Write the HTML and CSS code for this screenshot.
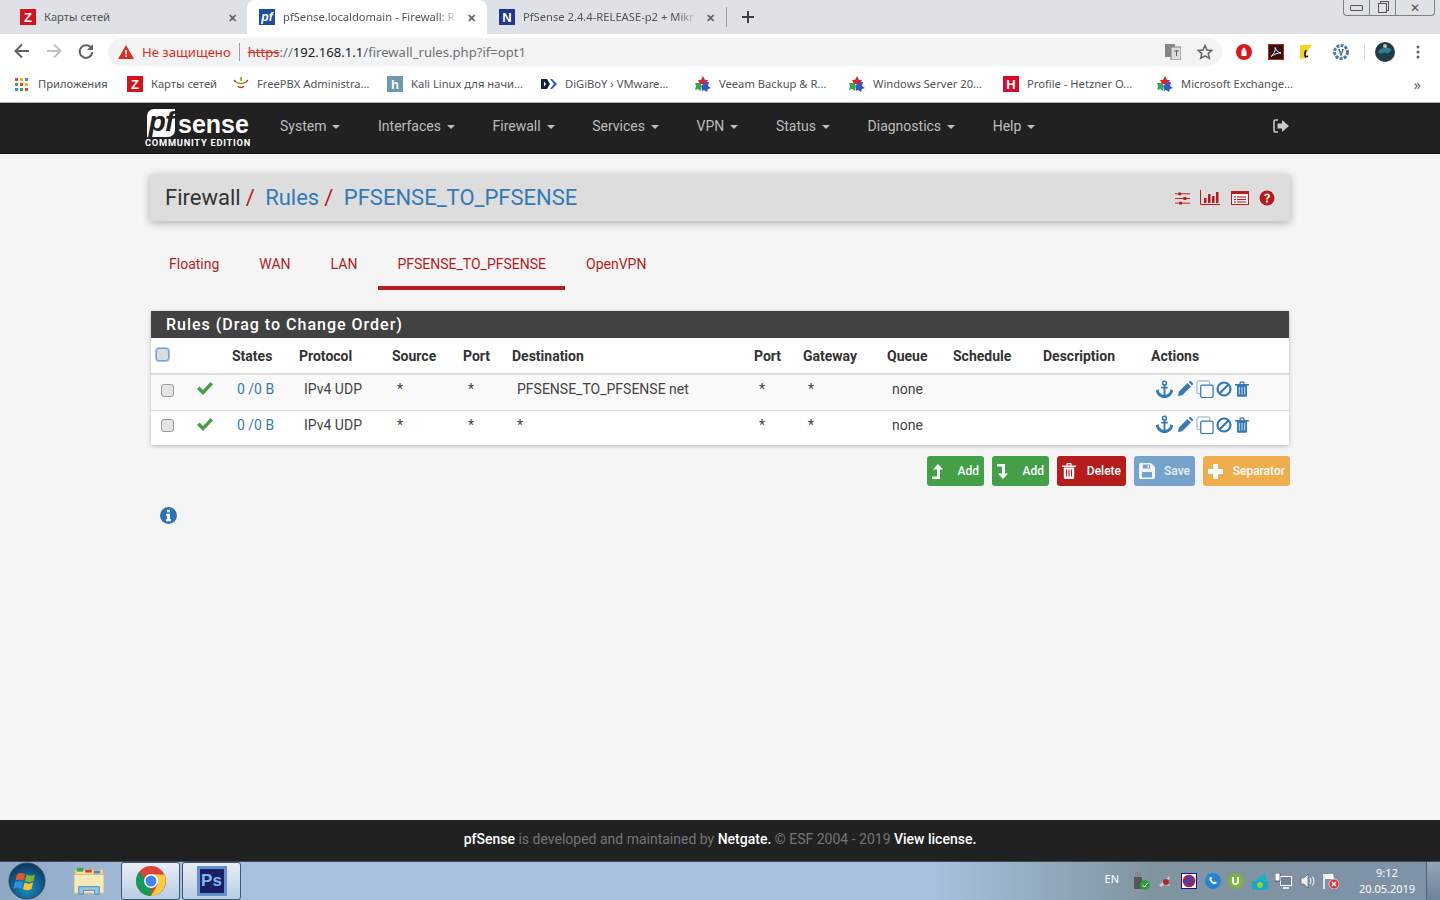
FILE: index.html
```html
<!DOCTYPE html>
<html lang="ru">

<head>
    <meta charset="utf-8">
    <title>pfSense.localdomain - Firewall: Rules</title>
    <link rel="stylesheet" href="styles.css">
</head>

<body>

    <svg class="defs" width="0" height="0">
        <defs>
            <symbol id="anchor" viewBox="0 0 20 20">
                <circle cx="10" cy="3.4" r="2" fill="none" stroke="currentColor" stroke-width="1.6" />
                <path d="M10 5v12M6.5 8h7" fill="none" stroke="currentColor" stroke-width="2" />
                <path d="M1 11l3-1.6v1.8c.6 2.6 3 4 5 4.3h2c2-.3 4.400-1.700 5-4.300V9.400L19 11c-.3 4.500-4.500 8-9 8s-8.700-3.500-9-8z" fill="currentColor" />
            </symbol>
            <symbol id="pencil" viewBox="0 0 16 16">
                <path d="M1 15l.8-4.200L10.500 2l3.500 3.500-8.800 8.700zM11.500 1l1-.8c.5-.3 1-.3 1.400 0l2 2c.3.400.3.900 0 1.400l-.9 1z" fill="currentColor" />
            </symbol>
            <symbol id="copy" viewBox="0 0 19 19">
                <path d="M5 14.500H2.500a1.500 1.500 0 0 1-1.500-1.500V2.500A1.500 1.500 0 0 1 2.500 1H13a1.500 1.500 0 0 1 1.500 1.500V5" fill="none" stroke="#7ea6d3" stroke-width="1" />
                <path d="M6.500 5.500h10a1.500 1.500 0 0 1 1.500 1.500v10a1.500 1.500 0 0 1-1.500 1.500h-10A1.500 1.500 0 0 1 5 17V7a1.500 1.500 0 0 1 1.500-1.500z" fill="none" stroke="currentColor" stroke-width="1.300" />
            </symbol>
            <symbol id="ban" viewBox="0 0 16 16">
                <circle cx="8" cy="8" r="6.500" fill="none" stroke="currentColor" stroke-width="2.200" />
                <path d="M3.500 12.500l9-9" stroke="currentColor" stroke-width="2.200" />
            </symbol>
            <symbol id="trash" viewBox="0 0 14 16">
                <path d="M0 3h14v1.500H0zM4.500 3V1.500C4.500.8 5 .5 5.500.5h3c.6 0 1 .3 1 1V3h-1.300V1.800H5.800V3z" fill="currentColor" />
                <path d="M2 4h10v10.500c0 .8-.5 1.300-1.200 1.300H3.200c-.7 0-1.200-.5-1.200-1.300z" fill="currentColor" />
                <path d="M4.300 6v7.500M7 6v7.500M9.700 6v7.500" stroke="#c3d3e6" stroke-width="1.100" />
            </symbol>
            <symbol id="check" viewBox="0 0 16 13">
                <path d="M0 7l2.500-2.500L6 8l7.500-8L16 2.500 6 13z" fill="currentColor" />
            </symbol>
            <symbol id="multistar" viewBox="0 0 16 16">
                <path d="M8 0l2 4h3l-2 4H5L3 4h3z" fill="#d8262c" />
                <path d="M0 7h5l2 3-1 5-3-2-3 1 1-4z" fill="#3aa655" />
                <path d="M7 9l3-3h4l-1 4 3 2-3 1-1 3-3-2-2 1z" fill="#3b55c8" />
            </symbol>
        </defs>
    </svg>

    <div class="window-controls">
        <span class="wc wc-min"><i></i></span>
        <span class="wc wc-max"><i></i></span>
        <span class="wc wc-close">&#10005;</span>
    </div>

    <header class="chrome">
        <div class="tabstrip">
            <div class="tab tab-first">
                <span class="fav fav-z">Z</span>
                <span class="tab-title">Карты сетей</span>
                <span class="tab-x">&#10005;</span>
            </div>
            <div class="tab tab-active">
                <span class="fav fav-pf">pf</span>
                <span class="tab-title tab-fade">pfSense.localdomain - Firewall: R</span>
                <span class="tab-x">&#10005;</span>
            </div>
            <div class="tab tab-last">
                <span class="fav fav-n">N</span>
                <span class="tab-title tab-fade">PfSense 2.4.4-RELEASE-p2 + Mikr</span>
                <span class="tab-x">&#10005;</span>
            </div>
            <span class="tab-sep"></span>
            <svg class="tab-plus" width="12" height="12" viewBox="0 0 12 12"><path d="M6 0v12M0 6h12" stroke="#3c4043" stroke-width="2" /></svg>
        </div>

        <div class="toolbar">
            <svg class="tool" width="16" height="16" viewBox="0 0 16 16"><path d="M15 8H2M8 1.500L1.500 8 8 14.500" fill="none" stroke="#5f6368" stroke-width="2" /></svg>
            <svg class="tool" width="16" height="16" viewBox="0 0 16 16"><path d="M1 8h13M8 1.500L14.500 8 8 14.500" fill="none" stroke="#bdc1c6" stroke-width="2" /></svg>
            <svg class="tool" width="16" height="16" viewBox="0 0 16 16"><path d="M13.500 5.500A6.300 6.300 0 1 0 14.300 9" fill="none" stroke="#5f6368" stroke-width="2" /><path d="M15 1v6H9z" fill="#5f6368" /></svg>
            <div class="omnibox">
                <svg class="warn" width="16" height="14" viewBox="0 0 16 14"><path d="M8 0l8 14H0z" fill="#d93025" /><path d="M7.200 5h1.600v4.500H7.200zM7.200 10.500h1.600V12H7.200z" fill="#fff" /></svg>
                <span class="not-secure">Не защищено</span>
                <span class="omni-sep"></span>
                <span class="url"><s class="url-https">https</s>://<b class="url-host">192.168.1.1</b>/firewall_rules.php?if=opt1</span>
                <svg class="translate" width="16" height="16" viewBox="0 0 16 16"><rect width="10" height="13" fill="#80868b" /><rect x="6" y="3" width="10" height="13" fill="#dadce0" stroke="#80868b" /><path d="M9 7h5M11.500 6v6" stroke="#5f6368" /></svg>
                <svg class="star" width="16" height="16" viewBox="0 0 16 16"><path d="M8 1.500l2 4.500 4.800.4-3.600 3.200 1.100 4.700L8 11.800l-4.300 2.500 1.100-4.700L1.200 6.400 6 6z" fill="none" stroke="#5f6368" stroke-width="1.500" /></svg>
            </div>
            <div class="extensions">
                <svg width="16" height="16" viewBox="0 0 16 16"><circle cx="8" cy="8" r="8" fill="#d9181f" /><path d="M5.500 12V6l1 .5V4l1 .5V3.500l1 .5 1 1v2l1-.5V12z" fill="#fff" /></svg>
                <svg width="16" height="16" viewBox="0 0 16 16"><rect width="16" height="16" fill="#c2200f" /><rect x="1" y="1" width="14" height="14" fill="#2a1414" /><path d="M3 12.500c3-2 4.500-6 4.200-9 .8 2.500 2.500 5 5.800 5.500-3.500 0-6.500 1-10 3.500z" fill="none" stroke="#eee" /></svg>
                <svg width="14" height="16" viewBox="0 0 14 16"><path d="M1 1h12L9 6 6 14l-5 1z" fill="#f7d21e" /><path d="M7 6c-1 2-1.500 5-.5 7l2.500-1" fill="none" stroke="#111" stroke-width="1.600" /></svg>
                <svg width="16" height="16" viewBox="0 0 16 16"><circle cx="8" cy="8" r="6.500" fill="none" stroke="#4a7dae" stroke-width="3" stroke-dasharray="3 1.200" /><path d="M5 5h2l1 4 1-4h2l-2.500 7h-1z" fill="#4a7dae" /></svg>
            </div>
            <span class="ext-sep"></span>
            <svg class="avatar" width="20" height="20" viewBox="0 0 20 20"><circle cx="10" cy="10" r="10" fill="#223c46" /><path d="M3 10c3-5 10-6 14-2-2 0-3 5-6 3s-5 3-8-1z" fill="#2f7f8f" /><circle cx="10" cy="4" r="2" fill="#b7c0bf" /></svg>
            <svg class="menu-dots" width="4" height="14" viewBox="0 0 4 14"><circle cx="2" cy="2" r="1.500" fill="#5f6368" /><circle cx="2" cy="7" r="1.500" fill="#5f6368" /><circle cx="2" cy="12" r="1.500" fill="#5f6368" /></svg>
        </div>

        <div class="bookmarks">
            <div class="bm bm-apps">
                <svg width="13" height="13" viewBox="0 0 13 13">
                    <path d="M0 0h3v3H0z" fill="#ea4335" /><path d="M5 0h3v3H5z" fill="#fbbc05" /><path d="M10 0h3v3h-3z" fill="#4285f4" />
                    <path d="M0 5h3v3H0z" fill="#34a853" /><path d="M5 5h3v3H5z" fill="#ea4335" /><path d="M10 5h3v3h-3z" fill="#fbbc05" />
                    <path d="M0 10h3v3H0z" fill="#4285f4" /><path d="M5 10h3v3H5z" fill="#34a853" /><path d="M10 10h3v3h-3z" fill="#ea4335" />
                </svg>
                <span>Приложения</span>
            </div>
            <div class="bm bm-maps"><span class="fav fav-z">Z</span><span>Карты сетей</span></div>
            <div class="bm">
                <svg class="bm-ico" width="16" height="16" viewBox="0 0 16 16"><path d="M1 4l2 2M15 4l-2 2M5 10c1 2 5 2 6 0" fill="none" stroke="#c0392b" stroke-width="1.500" /><path d="M3 6c2 2 8 2 10 0M8 1v4" fill="none" stroke="#7a9a1e" stroke-width="1.500" /></svg>
                <span>FreePBX Administra...</span>
            </div>
            <div class="bm"><span class="fav fav-h">h</span><span>Kali Linux для начи...</span></div>
            <div class="bm">
                <svg class="bm-ico" width="16" height="16" viewBox="0 0 16 16"><path d="M0 3h6l3 5-3 5H0z" fill="#15233f" /><path d="M3 5.500L5 8l-2 2.500z" fill="#fff" /><path d="M9 3h2l5 5-5 5H9l4-5z" fill="#2b56c8" /></svg>
                <span>DiGiBoY › VMware...</span>
            </div>
            <div class="bm"><svg class="bm-ico" width="16" height="16"><use href="#multistar" /></svg><span>Veeam Backup &amp; R...</span></div>
            <div class="bm"><svg class="bm-ico" width="16" height="16"><use href="#multistar" /></svg><span>Windows Server 20...</span></div>
            <div class="bm"><span class="fav fav-hz">H</span><span>Profile - Hetzner O...</span></div>
            <div class="bm"><svg class="bm-ico" width="16" height="16"><use href="#multistar" /></svg><span>Microsoft Exchange...</span></div>
            <span class="bm-more">»</span>
        </div>
    </header>

    <nav class="navbar">
        <div class="brand">
            <div class="brand-top">
                <span class="brand-pf">pf</span>
                <span class="brand-sense">sense</span>
            </div>
            <div class="brand-sub">COMMUNITY EDITION</div>
        </div>
        <ul class="nav-menu">
            <li>System<i class="caret"></i></li>
            <li>Interfaces<i class="caret"></i></li>
            <li>Firewall<i class="caret"></i></li>
            <li>Services<i class="caret"></i></li>
            <li>VPN<i class="caret"></i></li>
            <li>Status<i class="caret"></i></li>
            <li>Diagnostics<i class="caret"></i></li>
            <li>Help<i class="caret"></i></li>
        </ul>
        <svg class="logout" width="16" height="14" viewBox="0 0 16 14">
            <path d="M5 1H2.500A1.500 1.500 0 0 0 1 2.500v9A1.500 1.500 0 0 0 2.500 13H5" fill="none" stroke="#c9c9c9" stroke-width="1.600" />
            <path d="M4.500 4.500H9V1l7 6-7 6V9.500H4.500z" fill="#c9c9c9" />
        </svg>
    </nav>

    <main class="page">
        <div class="container">
            <div class="crumbs">
                <h1 class="crumb-title">
                    <span>Firewall</span><i class="slash">/</i>
                    <a class="crumb-link">Rules</a><i class="slash">/</i>
                    <a class="crumb-link">PFSENSE_TO_PFSENSE</a>
                </h1>
                <div class="crumb-icons">
                    <svg width="15" height="14" viewBox="0 0 16 14"><path d="M0 2.500h16M0 7.500h16M0 12.500h16" stroke="#b71c1c" stroke-width="1" /><path d="M3.500 1h3v3h-3zM9 6h3v3H9zM4.500 11h3v3h-3z" fill="#b71c1c" /></svg>
                    <svg width="20" height="15" viewBox="0 0 20 15"><path d="M.5 0v14.500H20" fill="none" stroke="#b71c1c" /><path d="M4 8h2.500v5H4zM8 4h2.500v9H8zM12 6h2.500v7H12zM16 2h2.500v11H16z" fill="#b71c1c" /></svg>
                    <svg width="18" height="14" viewBox="0 0 18 14"><rect x=".5" y=".5" width="17" height="13" fill="#eee" stroke="#b71c1c" /><path d="M0 0h18v3H0zM3 5.500h2v1H3zM6 5.500h9v1H6zM3 8h2v1H3zM6 8h9v1H6zM3 10.500h2v1H3zM6 10.500h9v1H6z" fill="#b71c1c" /></svg>
                    <svg width="16" height="16" viewBox="0 0 16 16"><circle cx="8" cy="8" r="7.500" fill="#b71c1c" /><path d="M5.200 6c0-3.500 5.800-3.500 5.800 0 0 2-2.200 2-2.200 3.500H7C7 7.500 9 7 9 6c0-1.300-1.800-1.300-2 0z" fill="#fff" /><path d="M7 10.500h1.900v2H7z" fill="#fff" /></svg>
                </div>
            </div>

            <ul class="tabs">
                <li>Floating</li>
                <li>WAN</li>
                <li>LAN</li>
                <li class="active">PFSENSE_TO_PFSENSE</li>
                <li>OpenVPN</li>
            </ul>

            <section class="panel">
                <h2 class="panel-heading">Rules (Drag to Change Order)</h2>
                <table class="rules">
                    <colgroup>
                        <col class="c-check"><col class="c-status"><col class="c-states"><col class="c-proto">
                        <col class="c-source"><col class="c-port"><col class="c-dest"><col class="c-port">
                        <col class="c-gateway"><col class="c-queue"><col class="c-sched"><col class="c-descr"><col class="c-actions">
                    </colgroup>
                    <thead>
                        <tr>
                            <th class="th-check"><span class="checkbox checkbox-all"></span></th>
                            <th></th>
                            <th>States</th>
                            <th>Protocol</th>
                            <th>Source</th>
                            <th>Port</th>
                            <th>Destination</th>
                            <th>Port</th>
                            <th>Gateway</th>
                            <th>Queue</th>
                            <th>Schedule</th>
                            <th>Description</th>
                            <th>Actions</th>
                        </tr>
                    </thead>
                    <tbody>
                        <tr class="row-shade">
                            <td><span class="checkbox"></span></td>
                            <td class="td-icon"><svg width="16" height="13"><use href="#check" /></svg></td>
                            <td class="link">0 /0 B</td>
                            <td>IPv4 UDP</td>
                            <td>*</td>
                            <td>*</td>
                            <td>PFSENSE_TO_PFSENSE net</td>
                            <td>*</td>
                            <td>*</td>
                            <td>none</td>
                            <td></td>
                            <td></td>
                            <td class="td-actions">
                                <svg class="a-anchor"><use href="#anchor" /></svg><svg class="a-pencil"><use href="#pencil" /></svg><svg class="a-copy"><use href="#copy" /></svg><svg class="a-ban"><use href="#ban" /></svg><svg class="a-trash"><use href="#trash" /></svg>
                            </td>
                        </tr>
                        <tr>
                            <td><span class="checkbox"></span></td>
                            <td class="td-icon"><svg width="16" height="13"><use href="#check" /></svg></td>
                            <td class="link">0 /0 B</td>
                            <td>IPv4 UDP</td>
                            <td>*</td>
                            <td>*</td>
                            <td>*</td>
                            <td>*</td>
                            <td>*</td>
                            <td>none</td>
                            <td></td>
                            <td></td>
                            <td class="td-actions">
                                <svg class="a-anchor"><use href="#anchor" /></svg><svg class="a-pencil"><use href="#pencil" /></svg><svg class="a-copy"><use href="#copy" /></svg><svg class="a-ban"><use href="#ban" /></svg><svg class="a-trash"><use href="#trash" /></svg>
                            </td>
                        </tr>
                    </tbody>
                </table>
            </section>

            <div class="buttons">
                <button class="btn btn-green btn-add">
                    <svg width="12" height="15" viewBox="0 0 12 15"><path d="M6 0l5 5.500H8V15H0v-2.500h5V5.500H1z" fill="#fff" /></svg>
                    Add
                </button>
                <button class="btn btn-green btn-add">
                    <svg width="12" height="15" viewBox="0 0 12 15"><path d="M0 0h8v9.500h3L6 15 1 9.500h4V2.500H0z" fill="#fff" /></svg>
                    Add
                </button>
                <button class="btn btn-red btn-del">
                    <svg width="14" height="16" viewBox="0 0 14 16"><path d="M0 2.500h14V4H0zM4.500 2.500V1c0-.5.500-1 1-1h3c.5 0 1 .5 1 1v1.500H8.300V1.200H5.700v1.300zM1.800 4.500h10.400v10c0 .8-.5 1.500-1.300 1.500H3c-.7 0-1.200-.7-1.200-1.500z" fill="#fff" /><path d="M4.500 6.500v7M7 6.500v7M9.500 6.500v7" stroke="#b71c1c" stroke-width="1.100" /></svg>
                    Delete
                </button>
                <button class="btn btn-blue btn-save">
                    <svg width="16" height="16" viewBox="0 0 16 16"><path d="M1.500 0h10.500L16 4v10.500c0 .8-.7 1.500-1.500 1.500h-13C.7 16 0 15.300 0 14.500v-13C0 .7.700 0 1.500 0z" fill="#eef4f9" /><path d="M4 1.500h7v4H4zM3 9h10v5.500H3z" fill="#76a3cb" /><path d="M8.500 2.200h1.500v2.500H8.500z" fill="#eef4f9" /></svg>
                    Save
                </button>
                <button class="btn btn-orange btn-sep">
                    <svg width="15" height="15" viewBox="0 0 15 15"><path d="M5 0h5v5h5v5h-5v5H5v-5H0V5h5z" fill="#fff" /></svg>
                    Separator
                </button>
            </div>

            <svg class="info" width="17" height="17" viewBox="0 0 17 17"><circle cx="8.500" cy="8.500" r="8.500" fill="#2f72b5" /><path d="M7 2.800h3v2.500H7zM6 6.800h4v5.500h1v2H6v-2h1V8.800H6z" fill="#fff" /></svg>
        </div>
    </main>

    <footer class="footer">
        <span class="foot-strong">pfSense</span>&nbsp;is developed and maintained by&nbsp;<span class="foot-strong">Netgate.</span>&nbsp;© ESF 2004 - 2019&nbsp;<span class="foot-strong">View license.</span>
    </footer>

    <div class="taskbar">
        <svg class="orb" width="38" height="38" viewBox="0 0 38 38">
            <defs>
                <radialGradient id="orbfill" cx="50%" cy="70%" r="65%"><stop offset="0" stop-color="#1c8fc7" /><stop offset="1" stop-color="#0c3a63" /></radialGradient>
            </defs>
            <circle cx="19" cy="19" r="18" fill="url(#orbfill)" stroke="#31475c" />
            <path d="M9 12c3-1.500 5-1.500 8 0l-1.500 6.500c-3-1-5-1-8 0z" fill="#e8532c" />
            <path d="M18.500 12.500c3 1.500 5.500 1.500 8.500 0L25.500 19c-3 1.500-5 1.500-8.500 0z" fill="#7bb72e" />
            <path d="M7 20c3-1 5-1 8 0l-1.500 6.500c-3-1-5-1-8 0z" fill="#2f8fe0" />
            <path d="M16.500 20.500c3 1.500 5.500 1.500 8.500 0l-1.500 6.500c-3 1.500-5 1.500-8.500 0z" fill="#f7c32e" />
        </svg>
        <div class="task-app task-folder">
            <svg width="32" height="30" viewBox="0 0 32 30">
                <path d="M1 3h30v24H1z" fill="#f2e2a4" stroke="#c9b36b" />
                <path d="M3 1h7v4H3z" fill="#3fa34d" /><path d="M12 3h7v3h-7z" fill="#d9402e" /><path d="M21 4h7v3h-7z" fill="#3d86d8" />
                <path d="M0 8h32v20H0z" fill="#f6e9ba" stroke="#cdb978" />
                <path d="M5 29v-8h22v8h-5v-4H10v4z" fill="#8fc6ea" stroke="#4f89b4" />
            </svg>
        </div>
        <div class="task-app task-on">
            <svg width="30" height="30" viewBox="0 0 30 30">
                <circle cx="15" cy="15" r="15" fill="#db4437" />
                <path d="M15 15L2 22.500A15 15 0 0 0 15 30z" fill="#0f9d58" />
                <path d="M2 22.500A15 15 0 0 1 3.500 5.500L11 17z" fill="#0f9d58" />
                <path d="M15 8.500h13.200A15 15 0 0 1 15 30l7-12z" fill="#ffcd40" />
                <circle cx="15" cy="15" r="7" fill="#fff" />
                <circle cx="15" cy="15" r="5.500" fill="#4285f4" />
            </svg>
        </div>
        <div class="task-app task-on">
            <span class="ps-icon">Ps</span>
        </div>

        <div class="tray">
            <span class="tray-lang">EN</span>
            <div class="tray-icons">
                <svg width="16" height="18" viewBox="0 0 16 18"><rect x="1" y="0" width="6" height="5" fill="#888" /><rect y="5" width="8" height="12" fill="#555" /><circle cx="11" cy="13" r="5" fill="#2f9e3a" /><path d="M8.500 13l2 2 3-4" fill="none" stroke="#fff" /></svg>
                <svg width="16" height="16" viewBox="0 0 16 16"><path d="M1 12l5-4 5-5 1 2-3 4 3 4-6-1-3 2z" fill="#c9c9c9" /><circle cx="8" cy="9" r="3" fill="#b5232a" /></svg>
                <svg width="16" height="16" viewBox="0 0 16 16"><rect width="16" height="16" fill="#10148a" /><rect x="1" y="1" width="14" height="14" fill="#fff" /><circle cx="8" cy="8" r="5.500" fill="#2a49c8" stroke="#d6121f" stroke-width="1.500" /><path d="M4 4l8 8" stroke="#d6121f" stroke-width="1.500" /></svg>
                <svg width="16" height="16" viewBox="0 0 16 16"><circle cx="8" cy="8" r="8" fill="#2184d8" /><path d="M4.500 5c1-2 2-1.500 2.500 0 0 1-1 1-.5 2l2 2c1 .5 1-.5 2-.5 1.500.5 2 1.500 0 2.500-3 1-7-4-6-6z" fill="#fff" /></svg>
                <svg width="16" height="16" viewBox="0 0 16 16"><circle cx="8" cy="8" r="8" fill="#7cb342" /><path d="M4 4v5c0 4 7 4 7 0V4H9v5c0 1.500-3 1.500-3 0V4z" fill="#fff" /></svg>
                <svg width="16" height="17" viewBox="0 0 16 17"><path d="M0 8h16v9H0z" fill="#1aa5c9" /><path d="M3 8l6-5 5-3v8z" fill="#17b5c4" /><circle cx="8" cy="12" r="3" fill="#8fd13f" /></svg>
                <svg width="17" height="16" viewBox="0 0 17 16"><rect x="5.500" y="3.500" width="11" height="9" fill="#6f8296" stroke="#fff" /><path d="M8 15h6" stroke="#fff" stroke-width="1.500" /><rect x="0" y="0" width="5" height="8" fill="#fff" stroke="#333" stroke-width=".7" /></svg>
                <svg width="16" height="16" viewBox="0 0 16 16"><path d="M1 5h3l4-4v14l-4-4H1z" fill="#eee" stroke="#555" stroke-width=".6" /><path d="M10 5c1 1.500 1 4.500 0 6M12.500 3.500c1.500 2.500 1.500 6.500 0 9" fill="none" stroke="#e8e8e8" stroke-width="1.200" /></svg>
                <svg width="16" height="16" viewBox="0 0 16 16"><path d="M1 1v15" stroke="#fff" stroke-width="1.500" /><path d="M2 1h8l1 5H2z" fill="#fff" /><circle cx="11" cy="11" r="5" fill="#d9363e" stroke="#fff" stroke-width=".6" /><path d="M9 9l4 4M13 9l-4 4" stroke="#fff" stroke-width="1.300" /></svg>
            </div>
            <div class="tray-clock">
                <span>9:12</span>
                <span>20.05.2019</span>
            </div>
            <span class="show-desktop"></span>
        </div>
    </div>

</body>

</html>
```

FILE: styles.css
```css
html,
body {
    margin: 0px;
    padding: 0px;
    width: 100%;
    height: 100%;
    overflow: hidden;
}

body {
    display: flex;
    flex-direction: column;
    font-family: Roboto, "Liberation Sans", sans-serif;
    font-size: 14px;
    color: #333;
    background-color: #f5f5f5;
}

.defs {
    position: absolute;
}

ul {
    list-style: none;
    margin: 0px;
    padding: 0px;
}

/* browser frame */

.chrome {
    font-family: "Noto Sans", "Liberation Sans", sans-serif;
    font-size: 11.200px;
    color: #50545a;
}

.window-controls {
    position: absolute;
    top: 0;
    right: 5px;
    width: 92px;
    height: 16px;
    display: flex;
    border: 1px solid #7b8087;
    border-top: none;
    border-radius: 0 0 4px 4px;
    box-sizing: border-box;
    color: #555;
}

.wc {
    display: flex;
    align-items: center;
    justify-content: center;
    border-right: 1px solid #7b8087;
    font-size: 12px;
}

.wc-min {
    width: 25px;
}

.wc-min i {
    width: 11px;
    height: 4px;
    border: 1px solid #555;
    border-radius: 1px;
}

.wc-max {
    width: 25px;
}

.wc-max i {
    width: 7px;
    height: 8px;
    border: 1px solid #555;
    box-shadow: 2px -2px 0 -1px #dee1e6, 2px -2px 0 0 #555;
}

.wc-close {
    flex: 1;
    border-right: none;
}

.tabstrip {
    height: 34px;
    background-color: #dee1e6;
    display: flex;
    align-items: center;
}

.tab {
    height: 34px;
    display: flex;
    align-items: center;
    box-sizing: border-box;
    flex: none;
}

.tab-first {
    width: 247px;
    padding: 0 9px 0 20px;
}

.tab-active {
    width: 240px;
    padding: 0 10px 0 12px;
    background-color: #fff;
    border-radius: 8px 8px 0 0;
}

.tab-last {
    width: 238px;
    padding: 0 9px 0 12px;
}

.tab-title {
    flex: 1;
    margin-left: 8px;
    padding-bottom: 2px;
    white-space: nowrap;
    overflow: hidden;
}

.tab-fade {
    -webkit-mask-image: linear-gradient(to right, #000 88%, transparent 100%);
    mask-image: linear-gradient(to right, #000 88%, transparent 100%);
}

.tab-x {
    width: 12px;
    margin-left: 6px;
    font-size: 11px;
    font-weight: bold;
    color: #5f6368;
    text-align: center;
}

.tab-sep {
    width: 1px;
    height: 20px;
    background-color: #9aa0a6;
    margin-left: 1px;
}

.tab-plus {
    margin-left: 15px;
}

.fav {
    width: 16px;
    height: 16px;
    flex: none;
    display: flex;
    align-items: center;
    justify-content: center;
    font-family: "Liberation Sans", sans-serif;
    font-weight: bold;
    color: #fff;
}

.fav-z {
    background-color: #d8121c;
    font-size: 13px;
}

.fav-pf {
    background-color: #1c4fa0;
    font-size: 12px;
    font-style: italic;
}

.fav-n {
    background-color: #23378f;
    font-size: 13px;
}

.fav-h {
    background-color: #6d98ad;
    font-size: 13px;
}

.fav-hz {
    background-color: #d50c2d;
    font-size: 13px;
}

.toolbar {
    height: 34px;
    background-color: #fff;
    display: flex;
    align-items: center;
    padding-left: 14px;
}

.tool {
    margin-right: 16px;
}

.toolbar .tool:nth-child(3) {
    margin-right: 14px;
}

.omnibox {
    width: 1114px;
    height: 28px;
    margin-top: 2px;
    border-radius: 14px;
    background-color: #f1f3f4;
    display: flex;
    align-items: center;
    box-sizing: border-box;
    padding-left: 10px;
    font-size: 13.100px;
}

.warn {
    flex: none;
}

.not-secure {
    color: #d93025;
    margin-left: 8px;
}

.omni-sep {
    width: 1px;
    height: 18px;
    background-color: #9aa0a6;
    margin: 0 8px 0 8px;
}

.url {
    flex: 1;
    color: #6e7276;
}

.url-https {
    color: #d93025;
}

.url-host {
    font-weight: normal;
    color: #202124;
}

.translate {
    margin-right: 16px;
}

.star {
    margin-right: 9px;
}

.extensions {
    display: flex;
    align-items: center;
    gap: 16px;
    margin-left: 14px;
    margin-top: 2px;
}

.extensions svg:nth-child(3) {
    margin-left: -1px;
    margin-right: 4px;
}

.ext-sep {
    width: 1px;
    height: 16px;
    background-color: #dadce0;
    margin: 2px 10px 0 15px;
}

.avatar {
    margin-top: 2px;
}

.menu-dots {
    margin: 2px 0 0 21px;
}

.bookmarks {
    height: 34px;
    box-sizing: border-box;
    padding: 0 19px 2px 15px;
    background-color: #fff;
    display: flex;
    align-items: center;
}

.bm {
    width: 154px;
    flex: none;
    display: flex;
    align-items: center;
    gap: 8px;
    white-space: nowrap;
}

.bm span:last-child {
    padding-bottom: 2px;
}

.bm-apps {
    width: 112px;
    gap: 10px;
}

.bm-maps {
    width: 106px;
}

.bm-ico {
    flex: none;
}

.bm-more {
    margin-left: auto;
    font-size: 14px;
    color: #5f6368;
}

/* pfsense top bar */

.navbar {
    height: 52px;
    background-color: #212121;
    border-top: 1px solid #b5b5b5;
    border-bottom: 1px solid #111;
    box-sizing: border-box;
    display: flex;
    align-items: center;
    padding-left: 145px;
    flex: none;
}

.brand {
    width: 106px;
    color: #fff;
    padding-bottom: 1px;
}

.brand-top {
    display: flex;
    align-items: flex-end;
    height: 30px;
    padding-left: 2px;
}

.brand-pf {
    width: 28px;
    height: 28px;
    background-color: #fff;
    color: #212121;
    border-radius: 7px 0 7px 0;
    font-family: "Liberation Sans", sans-serif;
    font-size: 28px;
    font-weight: bold;
    font-style: italic;
    line-height: 26px;
    text-align: center;
    letter-spacing: -1px;
}

.brand-sense {
    margin-left: 3px;
    font-family: "Liberation Sans", sans-serif;
    font-size: 25px;
    font-weight: 700;
    line-height: 26px;
}

.brand-sub {
    font-family: Roboto, sans-serif;
    font-size: 9.300px;
    font-weight: 700;
    line-height: 11px;
    letter-spacing: 0.750px;
    white-space: nowrap;
}

.nav-menu {
    display: flex;
    margin-left: 10px;
    padding-bottom: 4px;
    color: #bdbdbd;
}

.nav-menu li {
    padding: 0 18.600px 0 19px;
    white-space: nowrap;
}

.caret {
    display: inline-block;
    margin-left: 6px;
    vertical-align: middle;
    border-top: 4px solid;
    border-left: 4px solid transparent;
    border-right: 4px solid transparent;
}

.logout {
    position: absolute;
    left: 1273px;
    top: 119px;
}

/* main page */

.page {
    flex: 1;
    min-height: 0;
}

.container {
    width: 1140px;
    margin: 0 auto;
    padding-top: 20px;
}

.crumbs {
    height: 47px;
    background-color: #ddd;
    border-radius: 3px;
    box-shadow: 0 2px 8px rgba(0, 0, 0, 0.3);
    display: flex;
    align-items: center;
    justify-content: space-between;
    padding: 0 15px;
}

.crumb-title {
    margin: 0px;
    font-size: 22px;
    font-weight: 400;
    color: #333;
}

.crumb-link {
    color: #337ab7;
}

.slash {
    font-style: normal;
    color: #b71c1c;
    margin: 0 5px 0 5px;
}

.crumb-icons {
    display: flex;
    align-items: center;
    gap: 10px;
}

.crumb-icons svg:nth-child(2) {
    margin-right: 1px;
}

.tabs {
    display: flex;
    height: 50px;
    margin-top: 19px;
    padding-left: 0px;
    color: #b71c1c;
}

.tabs li {
    padding: 16px 19px 0 19px;
    box-sizing: border-box;
    height: 50px;
    margin-right: 2px;
}

.tabs li.active {
    border-bottom: 4px solid #b71c1c;
}

.panel {
    margin-top: 21px;
    background-color: #fff;
    box-shadow: 0 1px 4px rgba(0, 0, 0, 0.25);
    margin-right: 1px;
    margin-left: 1px;
}

.panel-heading {
    margin: 0px;
    height: 27px;
    line-height: 27px;
    padding-left: 15px;
    background-color: #424242;
    color: #fff;
    font-size: 16px;
    font-weight: 500;
    letter-spacing: 1px;
}

.rules {
    width: 1138px;
    border-collapse: collapse;
    table-layout: fixed;
    font-size: 14px;
}

.c-check { width: 40px; }
.c-status { width: 36px; }
.c-states { width: 67px; }
.c-proto { width: 93px; }
.c-source { width: 71px; }
.c-port { width: 49px; }
.c-dest { width: 242px; }
.c-gateway { width: 84px; }
.c-queue { width: 66px; }
.c-sched { width: 90px; }
.c-descr { width: 108px; }
.c-actions { width: 143px; }

.rules th {
    height: 36px;
    padding: 0 0 0 5px;
    text-align: left;
    font-weight: 700;
    border-bottom: 2px solid #ddd;
    box-sizing: border-box;
    white-space: nowrap;
}

.rules td {
    height: 36px;
    padding: 0 0 6px 10px;
    color: #444;
    border-bottom: 1px solid #ddd;
    box-sizing: border-box;
    white-space: nowrap;
}

.rules tbody tr:last-child td {
    height: 35px;
    border-bottom: none;
}

.row-shade td {
    background-color: #f9f9f9;
}

.rules .link {
    color: #337ab7;
}

.rules .td-icon {
    padding-left: 6px;
    padding-bottom: 4px;
    color: #43a047;
}

.th-check {
    vertical-align: top;
}

.checkbox {
    display: block;
    width: 11px;
    height: 11px;
    margin-top: 2px;
    border: 1px solid #9a9a9a;
    border-radius: 3px;
    background-color: #e4e4e4;
}

.checkbox-all {
    margin-top: 10px;
    border-color: #6f9fe0;
    box-shadow: 0 0 0 1px #a9c6ee;
    background-color: #dcdcdc;
}

.rules .td-actions {
    padding-left: 9px;
    color: #337ab7;
}

.td-actions svg {
    vertical-align: middle;
}

.a-anchor {
    width: 19px;
    height: 19px;
}

.a-pencil {
    width: 16px;
    height: 16px;
    margin-left: 3px;
}

.a-copy {
    width: 18px;
    height: 18px;
    margin-left: 3px;
}

.a-ban {
    width: 16px;
    height: 16px;
    margin-left: 2px;
}

.a-trash {
    width: 14px;
    height: 16px;
    margin-left: 3px;
}

.buttons {
    display: flex;
    justify-content: flex-end;
    gap: 8px;
    margin-top: 11px;
}

.btn {
    height: 30px;
    padding: 0 5px 0 5px;
    border: none;
    border-radius: 3px;
    color: #fff;
    font-family: Roboto, sans-serif;
    font-size: 12px;
    font-weight: 500;
    display: flex;
    align-items: center;
    justify-content: space-between;
    box-sizing: border-box;
}

.btn-add { width: 57px; }
.btn-del { width: 69px; }
.btn-save { width: 61px; }
.btn-sep { width: 87px; }

.btn-green { background-color: #43a047; }
.btn-red { background-color: #b71c1c; }
.btn-blue { background-color: #76a3cb; color: #e6eff7; }
.btn-orange { background-color: #f0ad4e; }

.info {
    display: block;
    margin: 21px 0 0 10px;
}

.footer {
    height: 41px;
    flex: none;
    background-color: #212121;
    color: #757575;
    display: flex;
    align-items: center;
    justify-content: center;
    box-sizing: border-box;
    padding-bottom: 3px;
}

.foot-strong {
    color: #fff;
    font-weight: 500;
}

/* windows taskbar */

.taskbar {
    height: 39px;
    flex: none;
    background: linear-gradient(to right, #8ea7c3 0%, #a6c0de 12%, #a6c0de 65%, #80949f 80%, #7e92a9 100%);
    border-top: 1px solid #3c4a58;
    box-sizing: border-box;
    display: flex;
    align-items: center;
}

.orb {
    margin-left: 8px;
    margin-right: 28px;
}

.task-app {
    width: 59px;
    height: 38px;
    display: flex;
    align-items: center;
    justify-content: center;
    box-sizing: border-box;
    flex: none;
    margin-right: 2px;
}

.task-folder {
    width: 30px;
    margin-right: 17px;
}

.task-on {
    background: linear-gradient(to bottom, #e7eef6, #b9cde3);
    border: 1px solid #40566e;
    border-radius: 3px;
}

.task-app svg {
    display: block;
}

.ps-icon {
    width: 30px;
    height: 30px;
    box-sizing: border-box;
    background-color: #1b1e63;
    border: 3px solid #5f91cf;
    color: #80b5ef;
    font-family: "Liberation Sans", sans-serif;
    font-size: 17px;
    font-weight: 700;
    line-height: 24px;
    text-align: center;
}

.tray {
    margin-left: auto;
    display: flex;
    align-items: center;
    height: 100%;
    color: #fff;
    font-family: "Noto Sans", sans-serif;
    font-size: 11px;
}

.tray-lang {
    margin-bottom: 6px;
}

.tray-icons {
    display: flex;
    align-items: center;
    gap: 7.500px;
    margin-left: 15px;
}

.tray-clock {
    width: 74px;
    margin-left: 11px;
    margin-right: 2px;
    display: flex;
    flex-direction: column;
    align-items: center;
    line-height: 16px;
    padding-bottom: 1px;
}

.show-desktop {
    width: 14px;
    height: 100%;
    background: linear-gradient(to bottom, #93a5b8, #6e8298);
    border-left: 1px solid #52626f;
    box-sizing: border-box;
}
```
